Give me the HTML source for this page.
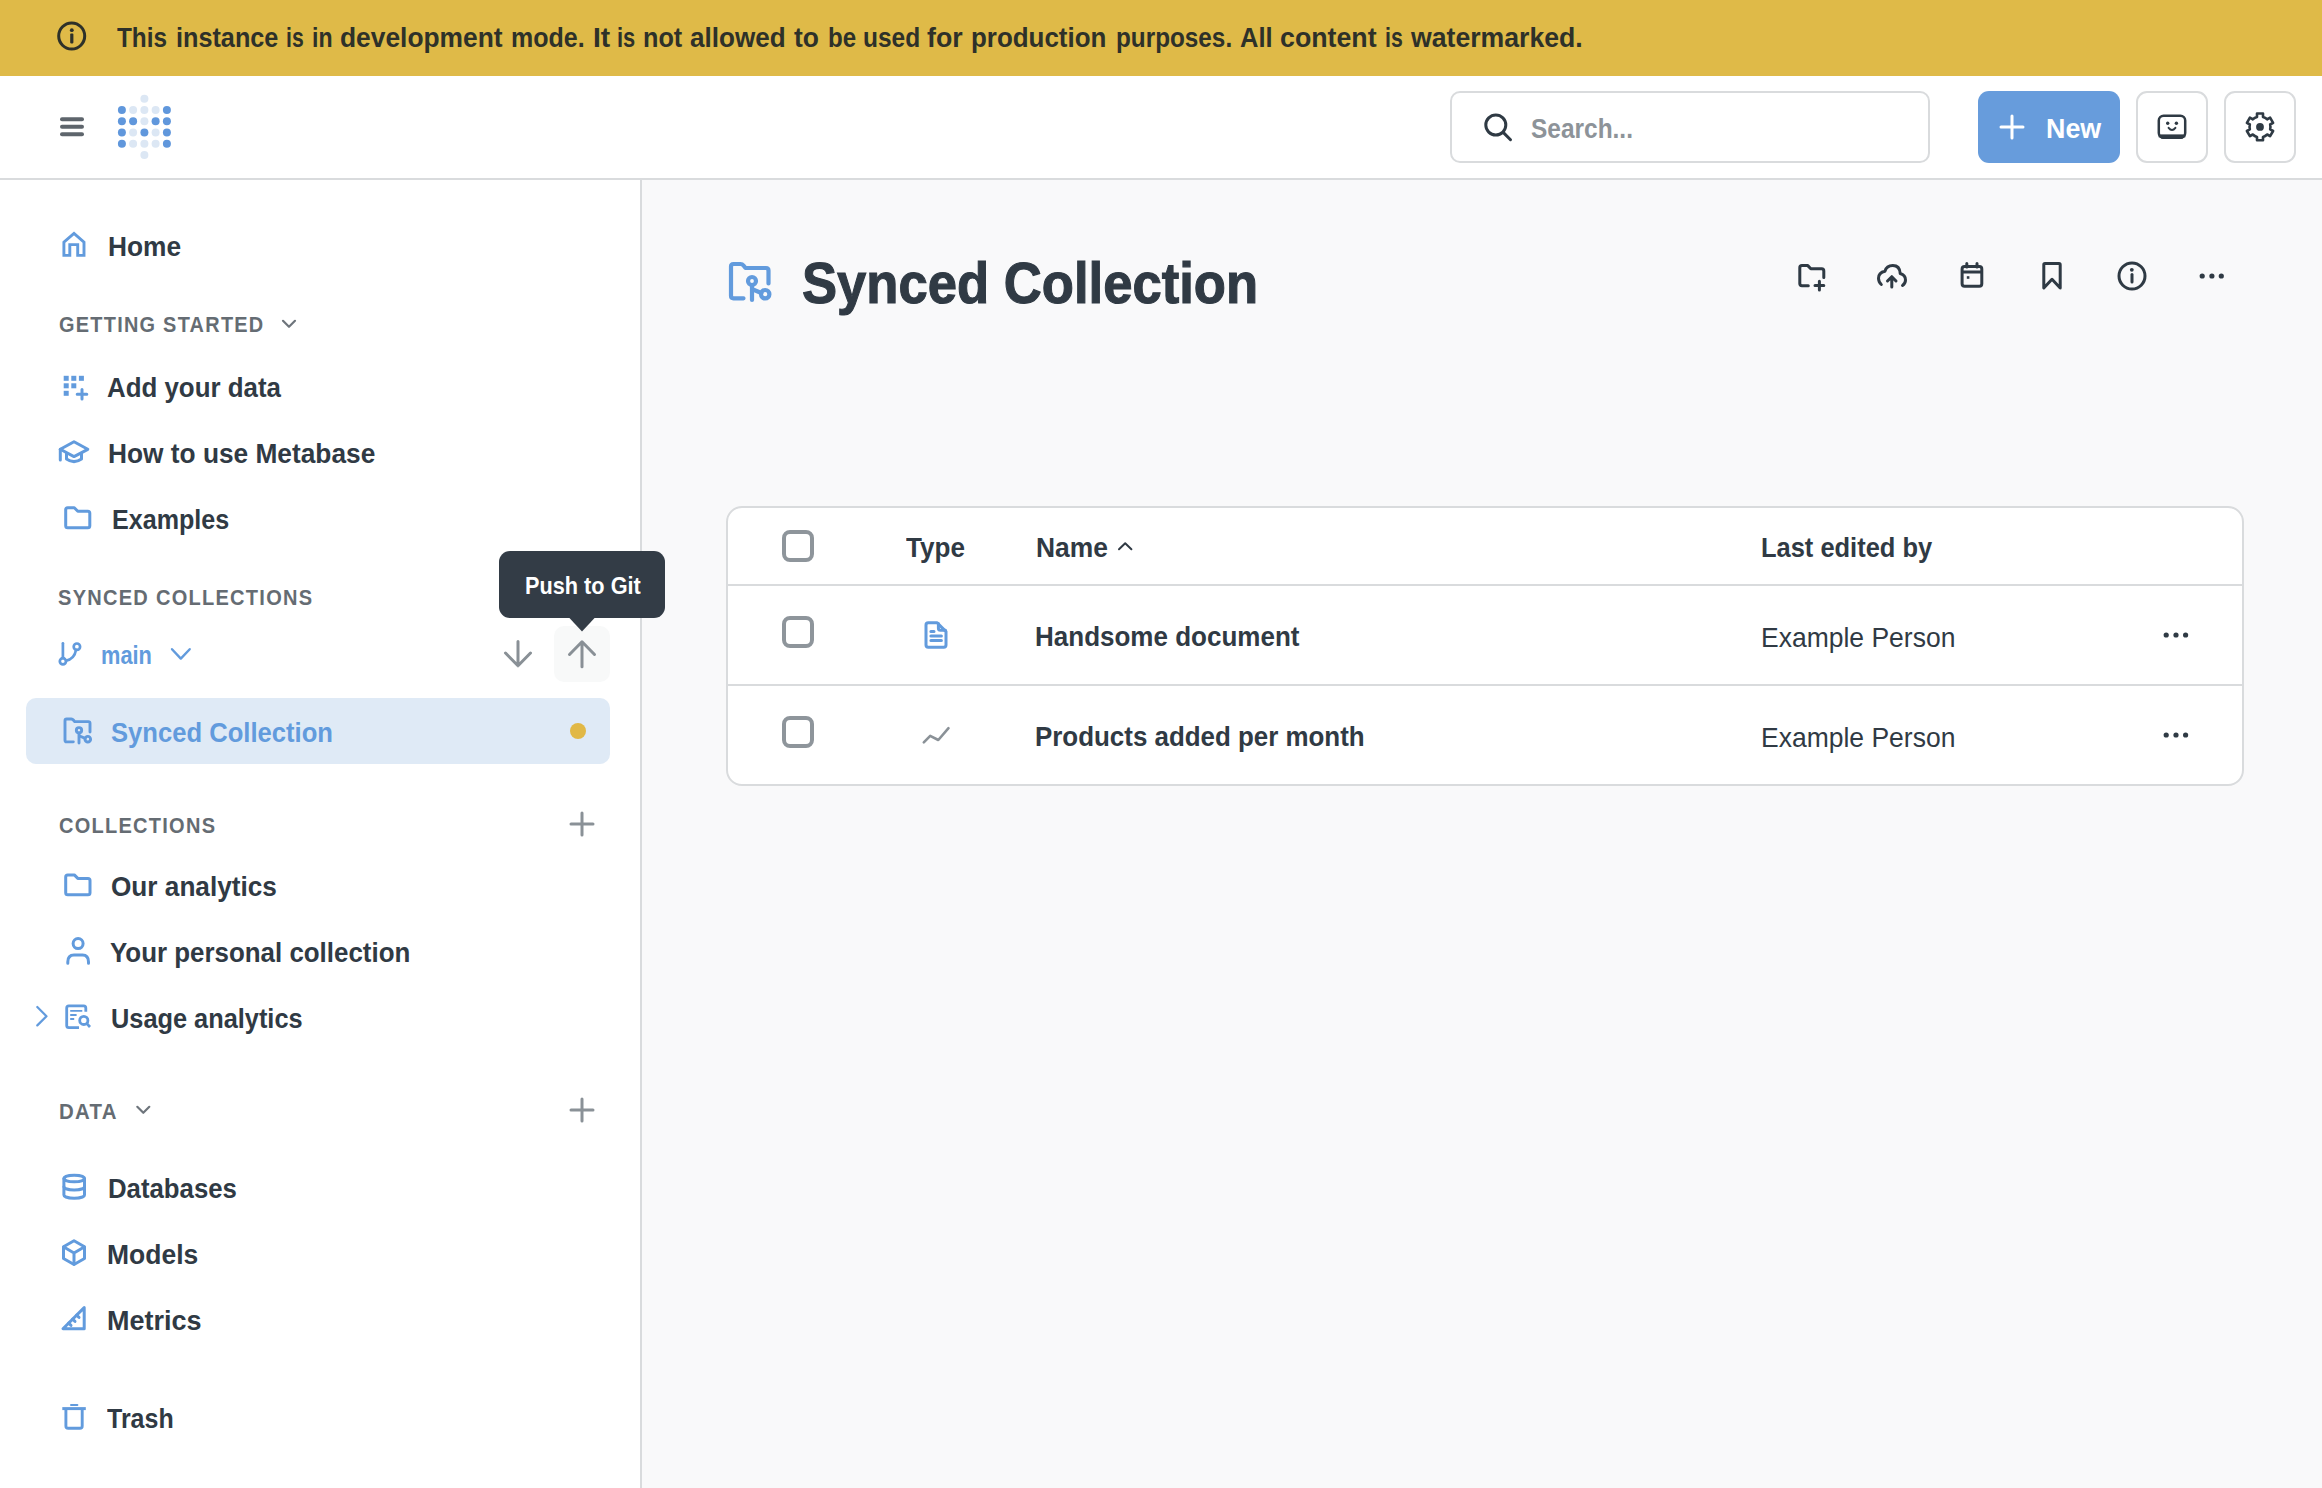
<!DOCTYPE html>
<html><head><meta charset="utf-8"><title>Metabase</title>
<style>
*{margin:0;padding:0;box-sizing:border-box}
html,body{width:2322px;height:1488px;overflow:hidden;background:#F9F9FA;font-family:"Liberation Sans",sans-serif}
.b{position:absolute}
.t{position:absolute;white-space:nowrap;line-height:1;transform-origin:0 0}
.i{position:absolute;overflow:visible}
</style></head><body>
<div class="b" style="left:0;top:0;width:2322px;height:76px;background:#DFBA48"></div>
<div class="b" style="left:0;top:76px;width:2322px;height:104px;background:#fff;border-bottom:2px solid #D9DBDD"></div>
<div class="b" style="left:0;top:180px;width:642px;height:1308px;background:#fff;border-right:2px solid #D9DBDD"></div>
<div class="b" style="left:1450px;top:91px;width:480px;height:72px;border:2px solid #D9DBDD;border-radius:10px;background:#fff"></div>
<div class="b" style="left:1978px;top:91px;width:142px;height:72px;border-radius:11px;background:#679CDC"></div>
<div class="b" style="left:2136px;top:91px;width:72px;height:72px;border:2px solid #D9DBDD;border-radius:11px;background:#fff"></div>
<div class="b" style="left:2224px;top:91px;width:72px;height:72px;border:2px solid #D9DBDD;border-radius:11px;background:#fff"></div>
<div class="b" style="left:26px;top:698px;width:584px;height:66px;border-radius:10px;background:#DFEAF6"></div>
<div class="b" style="left:554px;top:626px;width:56px;height:56px;border-radius:10px;background:#F8F9F9"></div>
<div class="b" style="left:570px;top:723px;width:16px;height:16px;border-radius:50%;background:#E1B846"></div>
<div class="b" style="left:726px;top:506px;width:1518px;height:280px;border:2px solid #D9DBDD;border-radius:16px;background:#fff"></div>
<div class="b" style="left:728px;top:584px;width:1514px;height:2px;background:#D9DBDD"></div>
<div class="b" style="left:728px;top:684px;width:1514px;height:2px;background:#D9DBDD"></div>
<svg class="i" style="left:728px;top:260.7px" width="46.0" height="44.0" viewBox="-1 -1 46.0 44.0"><g fill="none" stroke="#629BDD" stroke-width="4.2" stroke-linecap="round" stroke-linejoin="round"><path d="M14.5 36.3H4.5Q2 36.3 2 33.8V4.5Q2 2 4.5 2H11.5Q13.3 2 14.5 3.5L16.5 6H37Q39.5 6 39.5 8.5V21.5"/><circle cx="23" cy="19" r="4"/><path d="M23 23V38"/><circle cx="36.2" cy="32.2" r="4.2"/><path d="M24 27.5L32.3 31"/></g></svg>
<svg class="i" style="left:63px;top:717px" width="32.014" height="30.68" viewBox="-1 -1 47.99700149925037 45.99700149925037"><g fill="none" stroke="#629BDD" stroke-width="4.3478260869565215" stroke-linecap="round" stroke-linejoin="round"><path d="M14.5 36.3H4.5Q2 36.3 2 33.8V4.5Q2 2 4.5 2H11.5Q13.3 2 14.5 3.5L16.5 6H37Q39.5 6 39.5 8.5V21.5"/><circle cx="23" cy="19" r="4"/><path d="M23 23V38"/><circle cx="36.2" cy="32.2" r="4.2"/><path d="M24 27.5L32.3 31"/></g></svg>
<svg class="i" style="left:50px;top:15px;" width="45" height="45" viewBox="50 15 45 45"><circle cx="71.7" cy="36" r="13" fill="none" stroke="#2E3129" stroke-width="3"/><circle cx="71.8" cy="30.2" r="1.9" fill="#2E3129"/><rect x="70.2" y="33.6" width="3.2" height="9.8" rx="0.8" fill="#2E3129"/></svg><svg class="i" style="left:55px;top:110px;" width="35" height="35" viewBox="55 110 35 35"><line x1="62" y1="119.3" x2="82" y2="119.3" stroke="#5E656C" stroke-width="4" stroke-linecap="round"/><line x1="62" y1="126.8" x2="82" y2="126.8" stroke="#5E656C" stroke-width="4" stroke-linecap="round"/><line x1="62" y1="134.3" x2="82" y2="134.3" stroke="#5E656C" stroke-width="4" stroke-linecap="round"/></svg><svg class="i" style="left:110px;top:90px;" width="70" height="75" viewBox="110 90 70 75"><circle cx="144.4" cy="98.8" r="4" fill="#DCE7F4"/><circle cx="121.9" cy="109.9" r="4" fill="#6097DC"/><circle cx="133.1" cy="109.9" r="4" fill="#DCE7F4"/><circle cx="144.4" cy="109.9" r="4" fill="#DCE7F4"/><circle cx="155.6" cy="109.9" r="4" fill="#DCE7F4"/><circle cx="166.9" cy="109.9" r="4" fill="#6097DC"/><circle cx="121.9" cy="121.2" r="4" fill="#6097DC"/><circle cx="133.1" cy="121.2" r="4" fill="#6097DC"/><circle cx="144.4" cy="121.2" r="4" fill="#DCE7F4"/><circle cx="155.6" cy="121.2" r="4" fill="#6097DC"/><circle cx="166.9" cy="121.2" r="4" fill="#6097DC"/><circle cx="121.9" cy="132.4" r="4" fill="#6097DC"/><circle cx="133.1" cy="132.4" r="4" fill="#DCE7F4"/><circle cx="144.4" cy="132.4" r="4" fill="#6097DC"/><circle cx="155.6" cy="132.4" r="4" fill="#DCE7F4"/><circle cx="166.9" cy="132.4" r="4" fill="#6097DC"/><circle cx="121.9" cy="143.8" r="4" fill="#6097DC"/><circle cx="133.1" cy="143.8" r="4" fill="#DCE7F4"/><circle cx="144.4" cy="143.8" r="4" fill="#DCE7F4"/><circle cx="155.6" cy="143.8" r="4" fill="#DCE7F4"/><circle cx="166.9" cy="143.8" r="4" fill="#6097DC"/><circle cx="144.4" cy="155.1" r="4" fill="#DCE7F4"/></svg><svg class="i" style="left:1478px;top:106px;" width="40" height="40" viewBox="1478 106 40 40"><circle cx="1495.8" cy="125" r="10" fill="none" stroke="#2F3A44" stroke-width="3"/><line x1="1503.2" y1="132.4" x2="1510.5" y2="139.7" stroke="#2F3A44" stroke-width="3" stroke-linecap="round"/></svg><svg class="i" style="left:1995px;top:110px;" width="35" height="35" viewBox="1995 110 35 35"><path d="M2012 116V138M2001 127H2023" stroke="#fff" stroke-width="3" stroke-linecap="round"/></svg><svg class="i" style="left:2150px;top:108px;" width="45" height="40" viewBox="2150 108 45 40"><rect x="2158.8" y="115.8" width="26.4" height="22" rx="4.8" fill="none" stroke="#2F3A44" stroke-width="2.5"/><path d="M2158.6 134.5H2185.4V133Q2185.4 139 2180 139H2164Q2158.6 139 2158.6 133Z" fill="#2F3A44"/><rect x="2158.6" y="134.8" width="26.8" height="2.5" fill="#2F3A44"/><circle cx="2167.7" cy="123.3" r="1.7" fill="#2F3A44"/><circle cx="2176.4" cy="123.2" r="1.7" fill="#2F3A44"/><path d="M2168.6 127.8Q2172 132.2 2175.4 127.8" fill="none" stroke="#2F3A44" stroke-width="2" stroke-linecap="round"/></svg><svg class="i" style="left:2240px;top:106px;" width="40" height="42" viewBox="2240 106 40 42"><path d="M2257.00 116.90L2257.00 113.50L2263.00 113.50L2263.00 116.90A10.44 10.44 0 0 1 2267.16 119.30L2270.10 117.60L2273.10 122.80L2270.16 124.50A10.44 10.44 0 0 1 2270.16 129.30L2273.10 131.00L2270.10 136.20L2267.16 134.50A10.44 10.44 0 0 1 2263.00 136.90L2263.00 140.30L2257.00 140.30L2257.00 136.90A10.44 10.44 0 0 1 2252.84 134.50L2249.90 136.20L2246.90 131.00L2249.84 129.30A10.44 10.44 0 0 1 2249.84 124.50L2246.90 122.80L2249.90 117.60L2252.84 119.30A10.44 10.44 0 0 1 2257.00 116.90Z" fill="none" stroke="#2F3A44" stroke-width="2.6" stroke-linejoin="round"/><circle cx="2260" cy="126.9" r="3.9" fill="#2F3A44"/></svg><svg class="i" style="left:55px;top:225px;" width="38" height="38" viewBox="55 225 38 38"><path d="M63.9 255.4V242.2L74 233.4L84 242.2V255.4H77.7V244.6H69.8V255.4Z" fill="none" stroke="#629BDD" stroke-width="2.9" stroke-linejoin="miter"/></svg><svg class="i" style="left:58px;top:370px;" width="36" height="36" viewBox="58 370 36 36"><rect x="63.7" y="375.8" width="5" height="5" fill="#629BDD" stroke="none"/><rect x="71.3" y="375.8" width="5" height="5" fill="#629BDD" stroke="none"/><rect x="78.9" y="375.8" width="5" height="5" fill="#629BDD" stroke="none"/><rect x="63.7" y="383.3" width="5" height="5" fill="#629BDD" stroke="none"/><rect x="71.3" y="383.3" width="5" height="5" fill="#629BDD" stroke="none"/><rect x="63.7" y="390.8" width="5" height="5" fill="#629BDD" stroke="none"/><path d="M82 389.5V399M77.2 394.2H86.8" stroke="#629BDD" stroke-width="3" stroke-linecap="round"/></svg><svg class="i" style="left:52px;top:435px;" width="42" height="36" viewBox="52 435 42 36"><g fill="none" stroke="#629BDD" stroke-width="3" stroke-linejoin="round" stroke-linecap="round"><path d="M60.3 449.3L74 441.8L87.8 449.3L74 456.6Z"/><path d="M66.5 453.2V459Q74 464.2 81.5 459V453.2"/><path d="M60.3 449.3V460"/></g></svg><svg class="i" style="left:58px;top:500px;" width="40" height="36" viewBox="58 500 40 36"><g fill="none" stroke="#629BDD" stroke-width="3" stroke-linejoin="round" stroke-linecap="round"><path d="M65.7 509.8Q65.7 507.8 67.7 507.8H74.3L77.8 511.3H87.8Q89.8 511.3 89.8 513.3V525.7Q89.8 527.7 87.8 527.7H67.7Q65.7 527.7 65.7 525.7Z"/></g></svg><svg class="i" style="left:58px;top:867px;" width="40" height="36" viewBox="58 867 40 36"><g fill="none" stroke="#629BDD" stroke-width="3" stroke-linejoin="round" stroke-linecap="round"><path d="M65.7 876.9Q65.7 874.9 67.7 874.9H74.3L77.8 878.4H88.0Q90.0 878.4 90.0 880.4V892.8Q90.0 894.8 88.0 894.8H67.7Q65.7 894.8 65.7 892.8Z"/></g></svg><svg class="i" style="left:52px;top:636px;" width="36" height="36" viewBox="52 636 36 36"><g fill="none" stroke="#629BDD" stroke-width="2.7" stroke-linecap="round"><path d="M62.9 643.3V658.2"/><circle cx="62.9" cy="661.3" r="3.1"/><circle cx="76.9" cy="646.7" r="3.2"/><path d="M76 649.9Q74.5 659 66 660.8"/></g></svg><svg class="i" style="left:165px;top:642px;" width="32" height="24" viewBox="165 642 32 24"><path d="M172 649.2L180.8 658.6L189.7 649.2" fill="none" stroke="#629BDD" stroke-width="2.4" stroke-linecap="round" stroke-linejoin="round"/></svg><svg class="i" style="left:60px;top:932px;" width="36" height="38" viewBox="60 932 36 38"><g fill="none" stroke="#629BDD" stroke-width="3" stroke-linejoin="round" stroke-linecap="round"><circle cx="78.1" cy="943.6" r="5"/><path d="M67.8 963.3V962Q67.8 955 74 955H82.5Q88.5 955 88.5 962V963.3"/></g></svg><svg class="i" style="left:58px;top:998px;" width="38" height="38" viewBox="58 998 38 38"><g fill="none" stroke="#629BDD" stroke-linejoin="round"><path d="M85.8 1011.8V1008Q85.8 1005.9 83.7 1005.9H68.8Q66.7 1005.9 66.7 1008V1025.5Q66.7 1027.6 68.8 1027.6H79" stroke-width="2.8"/><path d="M70.2 1010.9H82.3M70.2 1015H76.6M70.2 1019H74.2" stroke-width="1.9"/><circle cx="83.8" cy="1020.4" r="4.1" stroke-width="2.8"/><path d="M86.6 1023.4L90 1027" stroke-width="2.8"/></g></svg><svg class="i" style="left:30px;top:1000px;" width="24" height="32" viewBox="30 1000 24 32"><path d="M37.3 1007L46.5 1016.2L37.3 1025.4" fill="none" stroke="#629BDD" stroke-width="2.2" stroke-linecap="round" stroke-linejoin="round"/></svg><svg class="i" style="left:56px;top:1166px;" width="38" height="42" viewBox="56 1166 38 42"><g fill="none" stroke="#629BDD" stroke-width="3" stroke-linejoin="round" stroke-linecap="round"><ellipse cx="74.2" cy="1178.5" rx="10.3" ry="3.3"/><path d="M63.9 1178.5V1194.9A10.3 3.3 0 0 0 84.5 1194.9V1178.5"/><path d="M63.9 1186.7A10.3 3.3 0 0 0 84.5 1186.7"/></g></svg><svg class="i" style="left:56px;top:1233px;" width="38" height="40" viewBox="56 1233 38 40"><g fill="none" stroke="#629BDD" stroke-width="3" stroke-linejoin="round" stroke-linecap="round"><path d="M74 1240.8L84.5 1246.8V1258.5L74 1264.5L63.5 1258.5V1246.8Z"/><path d="M63.8 1247L74 1253L84.2 1247M74 1253V1264"/></g></svg><svg class="i" style="left:56px;top:1300px;" width="36" height="38" viewBox="56 1300 36 38"><g fill="none" stroke="#629BDD" stroke-width="3" stroke-linejoin="round" stroke-linecap="round"><path d="M63 1328.8H84.2V1307.6Z"/><path d="M68.6 1323.2L71 1325.4M72.6 1319.2L75 1321.4M76.6 1315.2L79 1317.4"/></g></svg><svg class="i" style="left:55px;top:1398px;" width="38" height="38" viewBox="55 1398 38 38"><g fill="none" stroke="#629BDD"><path d="M62.3 1408.6H85.8" stroke-width="3"/><path d="M65.9 1409V1426Q65.9 1428.3 68.2 1428.3H79.9Q82.2 1428.3 82.2 1426V1409" stroke-width="2.9"/><path d="M71 1405H77.4" stroke-width="2" stroke-linecap="round"/></g></svg><svg class="i" style="left:278px;top:315px;" width="22" height="18" viewBox="278 315 22 18"><g fill="none" stroke="#6E757C" stroke-width="2.2" stroke-linecap="round" stroke-linejoin="round"><path d="M283 320.8L289 326.8L295 320.8"/></g></svg><svg class="i" style="left:132px;top:1100px;" width="22" height="18" viewBox="132 1100 22 18"><g fill="none" stroke="#6E757C" stroke-width="2.2" stroke-linecap="round" stroke-linejoin="round"><path d="M137.3 1106.8L143.3 1112.8L149.3 1106.8"/></g></svg><svg class="i" style="left:566px;top:808px;" width="32" height="32" viewBox="566 808 32 32"><g fill="none" stroke="#8A9197" stroke-width="3" stroke-linecap="round" stroke-linejoin="round"><path d="M582 813V835M571 824H593"/></g></svg><svg class="i" style="left:566px;top:1094px;" width="32" height="32" viewBox="566 1094 32 32"><g fill="none" stroke="#8A9197" stroke-width="3" stroke-linecap="round" stroke-linejoin="round"><path d="M582 1099V1121M571 1110H593"/></g></svg><svg class="i" style="left:500px;top:636px;" width="36" height="36" viewBox="500 636 36 36"><g fill="none" stroke="#899096" stroke-width="3" stroke-linecap="round" stroke-linejoin="round"><path d="M518 641.5V665.5M505.5 653L518 665.8L530.5 653"/></g></svg><svg class="i" style="left:564px;top:636px;" width="36" height="36" viewBox="564 636 36 36"><g fill="none" stroke="#899096" stroke-width="3" stroke-linecap="round" stroke-linejoin="round"><path d="M582 666.8V642.3M569.5 654.5L582 641.8L594.5 654.5"/></g></svg><svg class="i" style="left:1792px;top:258px;" width="40" height="40" viewBox="1792 258 40 40"><g fill="none" stroke="#2F3A44" stroke-width="3" stroke-linecap="round" stroke-linejoin="round"><path d="M1808.3 285.8H1802Q1799.8 285.8 1799.8 283.6V267.8Q1799.8 265.6 1802 265.6H1807.8L1810.8 268.8H1821.7Q1823.8 268.8 1823.8 271V277.5"/><path d="M1819.4 281.2V290M1815 285.6H1823.8"/></g></svg><svg class="i" style="left:1870px;top:258px;" width="44" height="36" viewBox="1870 258 44 36"><g fill="none" stroke="#2F3A44" stroke-width="3" stroke-linecap="round" stroke-linejoin="round"><path d="M1881.3 284.5Q1878.5 282 1878.5 278.3Q1878.5 272.5 1885 271.2Q1886.5 265.5 1892.8 265.5Q1899.8 265.5 1900.2 273.5Q1905.5 275 1905.5 280Q1905.5 283.5 1902.5 285.5"/><path d="M1891.8 287V277M1887.5 281L1891.8 276.7L1896 281"/></g></svg><svg class="i" style="left:1955px;top:256px;" width="34" height="38" viewBox="1955 256 34 38"><g fill="none" stroke="#2F3A44" stroke-width="3" stroke-linecap="round" stroke-linejoin="round"><rect x="1962.1" y="266.5" width="19.7" height="19.8" rx="2.5"/><path d="M1962.5 272H1981.5M1966.8 263.5V267M1977 263.5V267"/><rect x="1966.8" y="276.2" width="2.6" height="2.6" fill="#2F3A44" stroke="none"/></g></svg><svg class="i" style="left:2036px;top:256px;" width="32" height="38" viewBox="2036 256 32 38"><g fill="none" stroke="#2F3A44" stroke-width="3" stroke-linecap="round" stroke-linejoin="round"><path d="M2043.8 288V264.8Q2043.8 263.6 2045 263.6H2059Q2060.2 263.6 2060.2 264.8V288L2052 279.3Z"/></g></svg><svg class="i" style="left:2112px;top:256px;" width="40" height="40" viewBox="2112 256 40 40"><g fill="none" stroke="#2F3A44" stroke-width="3" stroke-linecap="round" stroke-linejoin="round"><circle cx="2132" cy="276" r="13"/><path d="M2132 282V274.5"/></g><circle cx="2131.8" cy="269.8" r="1.9" fill="#2F3A44"/></svg><svg class="i" style="left:2195px;top:268px;" width="34" height="16" viewBox="2195 268 34 16"><circle cx="2202.2" cy="276" r="2.6" fill="#2F3A44"/><circle cx="2211.9" cy="276" r="2.6" fill="#2F3A44"/><circle cx="2221.3" cy="276" r="2.6" fill="#2F3A44"/></svg><svg class="i" style="left:778px;top:526px;" width="40" height="40" viewBox="778 526 40 40"><rect x="784" y="532" width="28" height="28" rx="6" fill="none" stroke="#8E959B" stroke-width="4"/></svg><svg class="i" style="left:778px;top:612px;" width="40" height="40" viewBox="778 612 40 40"><rect x="784" y="618" width="28" height="28" rx="6" fill="none" stroke="#8E959B" stroke-width="4"/></svg><svg class="i" style="left:778px;top:712px;" width="40" height="40" viewBox="778 712 40 40"><rect x="784" y="718" width="28" height="28" rx="6" fill="none" stroke="#8E959B" stroke-width="4"/></svg><svg class="i" style="left:918px;top:615px;" width="36" height="40" viewBox="918 615 36 40"><g fill="none" stroke="#629BDD" stroke-width="3" stroke-linejoin="round" stroke-linecap="round"><path d="M937.2 622.8H928.2Q926 622.8 926 625V645Q926 647.2 928.2 647.2H943.8Q946 647.2 946 645V631.6Z"/><path d="M938.4 623.5V628.2Q938.4 630.2 940.4 630.2H945.5"/><path d="M930.9 631.4H934M930.9 636H941.4M930.9 640.6H941.4"/></g></svg><svg class="i" style="left:916px;top:722px;" width="40" height="28" viewBox="916 722 40 28"><g fill="none" stroke="#8A9197" stroke-width="2.6" stroke-linecap="round" stroke-linejoin="round"><path d="M923.8 742.3L930.2 735.8L938.3 740L948.5 728.2"/></g></svg><svg class="i" style="left:1112px;top:536px;" width="26" height="20" viewBox="1112 536 26 20"><g fill="none" stroke="#303A44" stroke-width="2" stroke-linecap="round" stroke-linejoin="round"><path d="M1119 549.2L1125.2 543.3L1131.4 549.2"/></g></svg><svg class="i" style="left:2158px;top:627.1px;" width="36" height="16" viewBox="2158 627.1 36 16"><circle cx="2166.2" cy="635.1" r="2.6" fill="#2F3A44"/><circle cx="2176" cy="635.1" r="2.6" fill="#2F3A44"/><circle cx="2185.6" cy="635.1" r="2.6" fill="#2F3A44"/></svg><svg class="i" style="left:2158px;top:726.9px;" width="36" height="16" viewBox="2158 726.9 36 16"><circle cx="2166.2" cy="734.9" r="2.6" fill="#2F3A44"/><circle cx="2176" cy="734.9" r="2.6" fill="#2F3A44"/><circle cx="2185.6" cy="734.9" r="2.6" fill="#2F3A44"/></svg>
<div class="t" style="left:1530.60px;top:115.19px;font-size:28px;color:#8D9399;font-weight:700;letter-spacing:0.00px;transform:scaleX(0.8735);">Search...</div><div class="t" style="left:2045.60px;top:115.19px;font-size:28px;color:#FFFFFF;font-weight:700;letter-spacing:0.00px;transform:scaleX(0.9586);">New</div><div class="t" style="left:107.80px;top:233.19px;font-size:28px;color:#303A44;font-weight:700;letter-spacing:0.00px;transform:scaleX(0.9397);">Home</div><div class="t" style="left:58.70px;top:314.27px;font-size:22px;color:#656C73;font-weight:700;letter-spacing:1.40px;transform:scaleX(0.9047);">GETTING STARTED</div><div class="t" style="left:106.70px;top:374.19px;font-size:28px;color:#303A44;font-weight:700;letter-spacing:0.00px;transform:scaleX(0.9238);">Add your data</div><div class="t" style="left:107.50px;top:440.49px;font-size:28px;color:#303A44;font-weight:700;letter-spacing:0.00px;transform:scaleX(0.9386);">How to use Metabase</div><div class="t" style="left:111.70px;top:505.89px;font-size:28px;color:#303A44;font-weight:700;letter-spacing:0.00px;transform:scaleX(0.8969);">Examples</div><div class="t" style="left:58.30px;top:587.27px;font-size:22px;color:#656C73;font-weight:700;letter-spacing:1.40px;transform:scaleX(0.9100);">SYNCED COLLECTIONS</div><div class="t" style="left:101.40px;top:642.73px;font-size:25px;color:#629BDD;font-weight:700;letter-spacing:0.00px;transform:scaleX(0.8724);">main</div><div class="t" style="left:110.80px;top:719.19px;font-size:28px;color:#629BDD;font-weight:700;letter-spacing:0.00px;transform:scaleX(0.9144);">Synced Collection</div><div class="t" style="left:58.60px;top:814.97px;font-size:22px;color:#656C73;font-weight:700;letter-spacing:1.40px;transform:scaleX(0.9087);">COLLECTIONS</div><div class="t" style="left:110.80px;top:873.49px;font-size:28px;color:#303A44;font-weight:700;letter-spacing:0.00px;transform:scaleX(0.9350);">Our analytics</div><div class="t" style="left:110.30px;top:939.19px;font-size:28px;color:#303A44;font-weight:700;letter-spacing:0.00px;transform:scaleX(0.9249);">Your personal collection</div><div class="t" style="left:111.10px;top:1005.19px;font-size:28px;color:#303A44;font-weight:700;letter-spacing:0.00px;transform:scaleX(0.9052);">Usage analytics</div><div class="t" style="left:59.40px;top:1101.27px;font-size:22px;color:#656C73;font-weight:700;letter-spacing:1.40px;transform:scaleX(0.9277);">DATA</div><div class="t" style="left:107.70px;top:1174.59px;font-size:28px;color:#303A44;font-weight:700;letter-spacing:0.00px;transform:scaleX(0.9200);">Databases</div><div class="t" style="left:107.20px;top:1241.19px;font-size:28px;color:#303A44;font-weight:700;letter-spacing:0.00px;transform:scaleX(0.9458);">Models</div><div class="t" style="left:107.20px;top:1307.19px;font-size:28px;color:#303A44;font-weight:700;letter-spacing:0.00px;transform:scaleX(0.9643);">Metrics</div><div class="t" style="left:106.70px;top:1405.49px;font-size:28px;color:#303A44;font-weight:700;letter-spacing:0.00px;transform:scaleX(0.8920);">Trash</div><div class="t" style="left:801.50px;top:254.74px;font-size:57px;color:#303A44;font-weight:700;letter-spacing:0.00px;transform:scaleX(0.9231);-webkit-text-stroke:1.1px #303A44;">Synced Collection</div><div class="t" style="left:906.30px;top:533.89px;font-size:28px;color:#303A44;font-weight:700;letter-spacing:0.00px;transform:scaleX(0.9317);">Type</div><div class="t" style="left:1036.10px;top:533.89px;font-size:28px;color:#303A44;font-weight:700;letter-spacing:0.00px;transform:scaleX(0.9434);">Name</div><div class="t" style="left:1761.10px;top:533.99px;font-size:28px;color:#303A44;font-weight:700;letter-spacing:0.00px;transform:scaleX(0.9090);">Last edited by</div><div class="t" style="left:1035.30px;top:622.99px;font-size:28px;color:#303A44;font-weight:700;letter-spacing:0.00px;transform:scaleX(0.9288);">Handsome document</div><div class="t" style="left:1035.30px;top:723.39px;font-size:28px;color:#303A44;font-weight:700;letter-spacing:0.00px;transform:scaleX(0.9253);">Products added per month</div><div class="t" style="left:1761.10px;top:623.89px;font-size:28px;color:#303A44;font-weight:400;letter-spacing:0.00px;transform:scaleX(0.9463);">Example Person</div><div class="t" style="left:1761.10px;top:723.89px;font-size:28px;color:#303A44;font-weight:400;letter-spacing:0.00px;transform:scaleX(0.9463);">Example Person</div><div class="t" style="left:117.10px;top:24.19px;font-size:28px;color:#2E3129;font-weight:700;letter-spacing:0.00px;transform:scaleX(0.8690);">This</div><div class="t" style="left:175.90px;top:24.19px;font-size:28px;color:#2E3129;font-weight:700;letter-spacing:0.00px;transform:scaleX(0.9009);">instance</div><div class="t" style="left:286.40px;top:24.19px;font-size:28px;color:#2E3129;font-weight:700;letter-spacing:0.00px;transform:scaleX(0.7565);">is</div><div class="t" style="left:311.60px;top:24.19px;font-size:28px;color:#2E3129;font-weight:700;letter-spacing:0.00px;transform:scaleX(0.8240);">in</div><div class="t" style="left:339.60px;top:24.19px;font-size:28px;color:#2E3129;font-weight:700;letter-spacing:0.00px;transform:scaleX(0.9410);">development</div><div class="t" style="left:511.00px;top:24.19px;font-size:28px;color:#2E3129;font-weight:700;letter-spacing:0.00px;transform:scaleX(0.8927);">mode.</div><div class="t" style="left:592.90px;top:24.19px;font-size:28px;color:#2E3129;font-weight:700;letter-spacing:0.00px;transform:scaleX(1.0059);">It</div><div class="t" style="left:617.00px;top:24.19px;font-size:28px;color:#2E3129;font-weight:700;letter-spacing:0.00px;transform:scaleX(0.7826);">is</div><div class="t" style="left:642.80px;top:24.19px;font-size:28px;color:#2E3129;font-weight:700;letter-spacing:0.00px;transform:scaleX(0.9000);">not</div><div class="t" style="left:690.20px;top:24.19px;font-size:28px;color:#2E3129;font-weight:700;letter-spacing:0.00px;transform:scaleX(0.9311);">allowed</div><div class="t" style="left:794.40px;top:24.19px;font-size:28px;color:#2E3129;font-weight:700;letter-spacing:0.00px;transform:scaleX(0.9423);">to</div><div class="t" style="left:827.50px;top:24.19px;font-size:28px;color:#2E3129;font-weight:700;letter-spacing:0.00px;transform:scaleX(0.8606);">be</div><div class="t" style="left:862.80px;top:24.19px;font-size:28px;color:#2E3129;font-weight:700;letter-spacing:0.00px;transform:scaleX(0.8738);">used</div><div class="t" style="left:927.40px;top:24.19px;font-size:28px;color:#2E3129;font-weight:700;letter-spacing:0.00px;transform:scaleX(0.9541);">for</div><div class="t" style="left:971.20px;top:24.19px;font-size:28px;color:#2E3129;font-weight:700;letter-spacing:0.00px;transform:scaleX(0.9260);">production</div><div class="t" style="left:1115.90px;top:24.19px;font-size:28px;color:#2E3129;font-weight:700;letter-spacing:0.00px;transform:scaleX(0.8679);">purposes.</div><div class="t" style="left:1239.90px;top:24.19px;font-size:28px;color:#2E3129;font-weight:700;letter-spacing:0.00px;transform:scaleX(0.9111);">All</div><div class="t" style="left:1280.40px;top:24.19px;font-size:28px;color:#2E3129;font-weight:700;letter-spacing:0.00px;transform:scaleX(0.9554);">content</div><div class="t" style="left:1384.60px;top:24.19px;font-size:28px;color:#2E3129;font-weight:700;letter-spacing:0.00px;transform:scaleX(0.7609);">is</div><div class="t" style="left:1410.75px;top:24.19px;font-size:28px;color:#2E3129;font-weight:700;letter-spacing:0.00px;transform:scaleX(0.9511);">watermarked.</div>
<div class="b" style="left:499px;top:551px;width:166px;height:67px;border-radius:11px;background:#333C46"></div>
<svg class="i" style="left:566px;top:615px" width="32" height="18" viewBox="566 615 32 18"><path d="M568.5 617L582 631.6L595.5 617Z" fill="#333C46"/></svg>
<div class="t" style="left:524.50px;top:573.68px;font-size:24px;color:#FFFFFF;font-weight:700;letter-spacing:0.00px;transform:scaleX(0.9047);">Push to Git</div>
</body></html>
